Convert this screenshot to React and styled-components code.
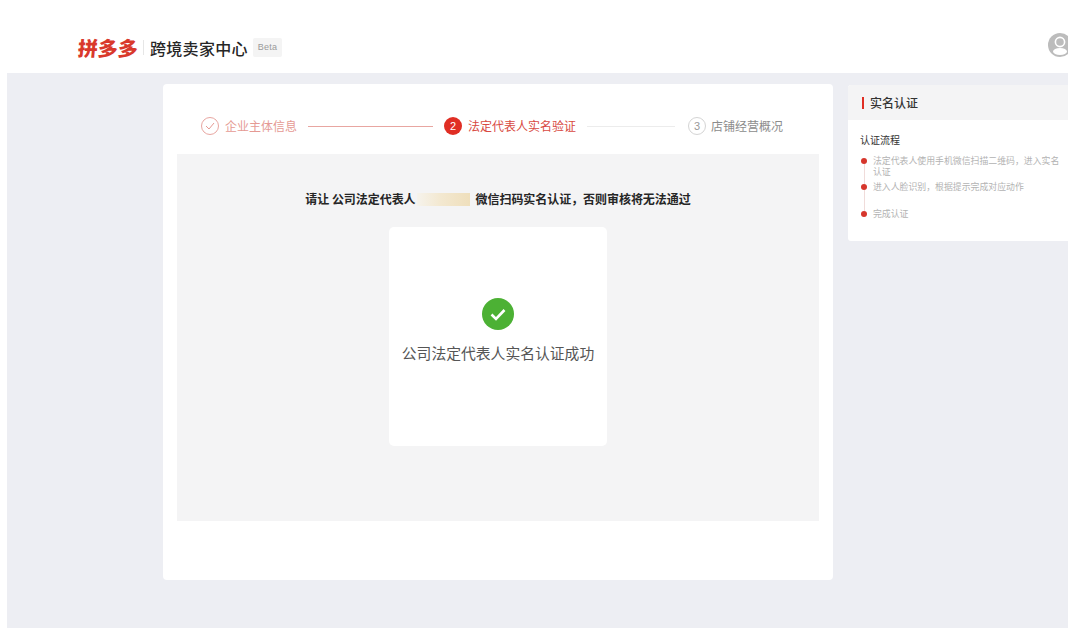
import React from 'react';
import styled, { createGlobalStyle } from 'styled-components';

const RED = '#e02e24';
const FONT = '"Noto Sans CJK SC", "Noto Sans", sans-serif';

const GlobalStyle = createGlobalStyle`
  html, body { margin: 0; padding: 0; background: #fff; }
  body { font-family: ${FONT}; width: 1080px; height: 640px; overflow: hidden; }
`;

const Page = styled.div`
  width: 1080px;
  height: 640px;
  display: flex;
  flex-direction: column;
  background: #fff;
`;

const Header = styled.header`
  width: 1068px;
  height: 73px;
  flex: none;
  box-sizing: border-box;
  padding: 22px 0 0 78px;
  display: flex;
  align-items: center;
  overflow: hidden;
`;

const Logo = styled.div`
  font-size: 20px;
  line-height: 24px;
  font-weight: 900;
  color: #d9392c;
  width: 60px;
  white-space: nowrap;
  transform: skewX(-5deg);
`;

const LogoDivider = styled.span`
  width: 1px;
  height: 15px;
  background: #e6e6e6;
  margin: 0 6px 0 5px;
`;

const Title = styled.div`
  font-size: 16px;
  line-height: 22px;
  font-weight: 500;
  letter-spacing: 0.3px;
  color: #262626;
  white-space: nowrap;
  width: 98px;
`;

const BetaTag = styled.span`
  margin-left: 5px;
  width: 29px;
  height: 19px;
  border-radius: 2px;
  background: #f4f4f4;
  color: #9a9a9a;
  font-family: "Liberation Sans", sans-serif;
  font-size: 9px;
  letter-spacing: 0.2px;
  line-height: 19px;
  text-align: center;
`;

const Avatar = styled.svg`
  margin-left: auto;
  margin-right: -4px;
  margin-top: -5px;
  width: 24px;
  height: 24px;
  flex: none;
`;

const Body = styled.main`
  width: 1061px;
  height: 555px;
  margin-left: 7px;
  background: #edeef3;
  box-sizing: border-box;
  padding: 11px 0 0 156px;
  display: flex;
  align-items: flex-start;
`;

const MainCard = styled.section`
  width: 670px;
  height: 496px;
  flex: none;
  box-sizing: border-box;
  padding: 0 14px;
  background: #fff;
  border-radius: 4px;
`;

const Steps = styled.div`
  height: 70px;
  box-sizing: border-box;
  padding: 14px 0 0 24px;
  display: flex;
  align-items: center;
`;

const StepCircle = styled.span`
  width: 18px;
  height: 18px;
  flex: none;
  box-sizing: border-box;
  border-radius: 50%;
  display: flex;
  align-items: center;
  justify-content: center;
  font-family: "Liberation Sans", sans-serif;
  font-size: 11px;
  line-height: 1;
  border: ${p => (p.$state === 'active' ? '0' : '1px solid')};
  border-color: ${p => (p.$state === 'done' ? '#e8a6a1' : '#d4d4d4')};
  background: ${p => (p.$state === 'active' ? RED : 'transparent')};
  color: ${p => (p.$state === 'active' ? '#fff' : p.$state === 'done' ? '#e8a6a1' : '#999')};
`;

const StepLabel = styled.span`
  margin-left: ${p => p.$gap}px;
  font-size: 12px;
  line-height: 18px;
  white-space: nowrap;
  color: ${p => (p.$state === 'active' ? '#d84a42' : p.$state === 'done' ? '#e59a94' : '#8c8c8c')};
`;

const StepLine = styled.span`
  width: ${p => p.$width}px;
  height: 1px;
  flex: none;
  margin: ${p => p.$margin};
  background: ${p => (p.$done ? '#e8a6a1' : '#ececec')};
`;

const Panel = styled.div`
  width: 642px;
  height: 367px;
  background: #f4f4f5;
  box-sizing: border-box;
  padding-top: 35px;
  display: flex;
  flex-direction: column;
  align-items: center;
`;

const Notice = styled.div`
  height: 20px;
  display: flex;
  align-items: center;
  font-size: 12px;
  line-height: 20px;
  font-weight: 700;
  letter-spacing: -0.05px;
  color: #262626;
  white-space: nowrap;
  margin-bottom: 18px;
`;

const Redacted = styled.span`
  width: 53px;
  height: 13px;
  margin: 0 6px 0 1px;
  background: linear-gradient(90deg, #f6f3ec 0%, #f3e8d0 45%, #efdfbc 100%);
`;

const ResultCard = styled.div`
  width: 218px;
  height: 219px;
  box-sizing: border-box;
  padding-top: 71px;
  background: #fff;
  border-radius: 5px;
  display: flex;
  flex-direction: column;
  align-items: center;
`;

const ResultText = styled.div`
  margin-top: 13px;
  font-size: 14.8px;
  line-height: 20px;
  color: #555;
  white-space: nowrap;
`;

const SideCard = styled.aside`
  width: 220px;
  height: 156px;
  flex: none;
  margin: 1px 0 0 15px;
  background: #fff;
  border-radius: 3px 0 0 3px;
  overflow: hidden;
`;

const SideHead = styled.div`
  height: 35px;
  box-sizing: border-box;
  padding-left: 14px;
  background: #f4f4f5;
  display: flex;
  align-items: center;
  font-size: 12px;
  font-weight: 500;
  color: #333;
`;

const SideMark = styled.span`
  width: 2px;
  height: 12px;
  margin-right: 6px;
  background: ${RED};
`;

const SideBody = styled.div`
  padding: 13px 4px 0 12px;
`;

const SideTitle = styled.div`
  font-size: 10px;
  line-height: 14px;
  color: #333;
  margin-bottom: 8px;
`;

const Timeline = styled.ol`
  list-style: none;
  margin: 0;
  padding: 0;
`;

const TimelineItem = styled.li`
  position: relative;
  min-height: ${p => p.$height}px;
  padding-left: 13px;
  font-size: 8.9px;
  line-height: 11px;
  color: #b3b3b3;

  &::before {
    content: '';
    position: absolute;
    left: 1px;
    top: 3px;
    width: 6px;
    height: 6px;
    border-radius: 50%;
    background: #d6362c;
  }

  &:not(:last-child)::after {
    content: '';
    position: absolute;
    left: 3.5px;
    top: 9px;
    bottom: -3px;
    width: 1px;
    background: #f0dcda;
  }
`;

const steps = [
  { state: 'done', label: '企业主体信息', gap: 6 },
  { state: 'active', label: '法定代表人实名验证', gap: 6 },
  { state: 'todo', label: '店铺经营概况', gap: 5 }
];

const flow = [
  { text: '法定代表人使用手机微信扫描二维码，进入实名认证', height: 26 },
  { text: '进入人脸识别，根据提示完成对应动作', height: 27 },
  { text: '完成认证', height: 14 }
];

const App = () => (
  <Page>
    <GlobalStyle />
    <Header>
      <Logo>拼多多</Logo>
      <LogoDivider />
      <Title>跨境卖家中心</Title>
      <BetaTag>Beta</BetaTag>
      <Avatar viewBox="0 0 24 24">
        <circle cx="12" cy="12" r="12" fill="#bcbcbc" />
        <circle cx="12" cy="9" r="4.600" fill="none" stroke="#fff" strokeWidth="1.600" />
        <ellipse cx="12" cy="18.500" rx="7" ry="3.500" fill="#fff" />
      </Avatar>
    </Header>
    <Body>
      <MainCard>
        <Steps>
          <StepCircle $state="done">
            <svg width="10" height="8" viewBox="0 0 10 8" fill="none">
              <path d="M1 4l3 3 5-6" stroke="#e59a94" strokeWidth="1" />
            </svg>
          </StepCircle>
          <StepLabel $state={steps[0].state} $gap={steps[0].gap}>{steps[0].label}</StepLabel>
          <StepLine $done $width={125} $margin="0 11px" />
          <StepCircle $state="active">2</StepCircle>
          <StepLabel $state={steps[1].state} $gap={steps[1].gap}>{steps[1].label}</StepLabel>
          <StepLine $width={88} $margin="0 13px 0 11px" />
          <StepCircle $state="todo">3</StepCircle>
          <StepLabel $state={steps[2].state} $gap={steps[2].gap}>{steps[2].label}</StepLabel>
        </Steps>
        <Panel>
          <Notice>
            请让 公司法定代表人
            <Redacted />
            微信扫码实名认证，否则审核将无法通过
          </Notice>
          <ResultCard>
            <svg width="32" height="32" viewBox="0 0 32 32">
              <circle cx="16" cy="16" r="16" fill="#4cb134" />
              <path d="M9.500 16.500l4.500 4.500 8.500-9" fill="none" stroke="#fff" strokeWidth="2.600" />
            </svg>
            <ResultText>公司法定代表人实名认证成功</ResultText>
          </ResultCard>
        </Panel>
      </MainCard>
      <SideCard>
        <SideHead>
          <SideMark />
          实名认证
        </SideHead>
        <SideBody>
          <SideTitle>认证流程</SideTitle>
          <Timeline>
            {flow.map(item => (
              <TimelineItem key={item.text} $height={item.height}>{item.text}</TimelineItem>
            ))}
          </Timeline>
        </SideBody>
      </SideCard>
    </Body>
  </Page>
);

export default App;
